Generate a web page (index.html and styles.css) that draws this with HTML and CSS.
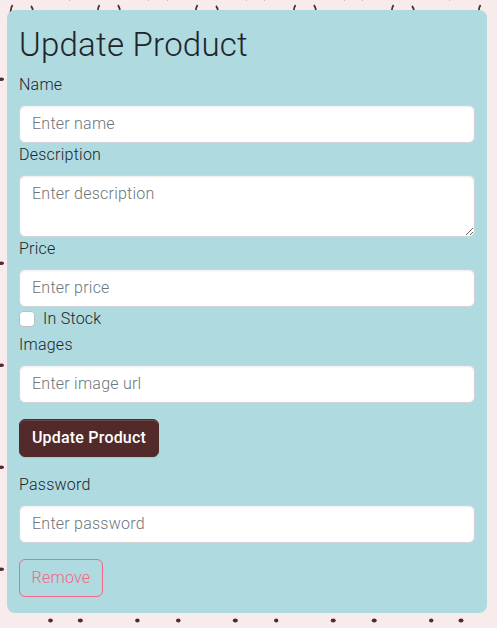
FILE: index.html
```html
<!DOCTYPE html>
<html lang="en">
<head>
<meta charset="utf-8">
<title>Update Product</title>
<link rel="stylesheet" href="styles.css">
</head>
<body>
<svg class="pattern" width="497" height="628" aria-hidden="true">
  <g class="strokes">
    <path d="M12.500 5Q11 7 10.500 12M31 6Q33 8 33 12M99.500 5Q98 7 97.500 12M118 5Q120 8 120 12M197.500 5Q196 7 195.500 12M216 6Q218 8 218 12M295.500 5Q294 7 293.500 12M314 5Q316 8 316 12M393.500 5Q392 7 391.500 12M412 6Q414 8 414 12M480.500 5Q479 7 478.500 12"/>
  </g>
  <g class="specks"><path d="M148 0h1M246 0h1M344 0h1M449 0h1M69 0h1M167 0h1M264 0h1M362 0h1"/></g>
  <g class="dots">
    <ellipse cx="1.500" cy="79.300" rx="2.500" ry="1.800"/><ellipse cx="1.500" cy="263.300" rx="2.500" ry="1.800"/><ellipse cx="1.500" cy="365.300" rx="2.500" ry="1.800"/><ellipse cx="1.500" cy="467.300" rx="2.500" ry="1.800"/><ellipse cx="1.500" cy="569.300" rx="2.500" ry="1.800"/>
    <ellipse cx="50.500" cy="620.500" rx="2.300" ry="2"/><ellipse cx="80.300" cy="620.500" rx="2.500" ry="1.900"/><ellipse cx="137.400" cy="620.500" rx="2.200" ry="2"/><ellipse cx="178.300" cy="620.500" rx="2.300" ry="2"/><ellipse cx="235.300" cy="620.500" rx="2.500" ry="1.900"/><ellipse cx="276.200" cy="620.500" rx="2.100" ry="2"/><ellipse cx="333.200" cy="620.500" rx="2.500" ry="1.900"/><ellipse cx="374.200" cy="620.500" rx="2.500" ry="2"/><ellipse cx="431.200" cy="620.500" rx="2.200" ry="2"/><ellipse cx="461" cy="620.500" rx="2.500" ry="1.900"/>
  </g>
</svg>
<main class="card">
  <h1 class="title">Update Product</h1>
  <form>
    <label class="label" for="name">Name</label>
    <input class="control" id="name" placeholder="Enter name">
    <label class="label" for="description">Description</label>
    <textarea class="control area" id="description" placeholder="Enter description"></textarea>
    <label class="label" for="price">Price</label>
    <input class="control" id="price" placeholder="Enter price">
    <div class="check"><input class="box" type="checkbox" id="stock"><label for="stock">In Stock</label></div>
    <label class="label" for="images">Images</label>
    <input class="control" id="images" placeholder="Enter image url">
    <button class="btn primary" type="button">Update Product</button>
  </form>
  <form class="remove">
    <label class="label" for="password">Password</label>
    <input class="control" id="password" type="password" placeholder="Enter password">
    <button class="btn danger" type="button">Remove</button>
  </form>
</main>
</body>
</html>
```

FILE: styles.css
```css
* { box-sizing: border-box; }
body {
  margin: 0;
  padding: 10px 10px 15px 7px;
  height: 628px;
  overflow: hidden;
  background: #f8ebeb;
  color: #212529;
  font: 300 16px/24px Roboto, "Liberation Sans", sans-serif;
  letter-spacing: .24px;
}
.pattern { position: absolute; inset: 0; z-index: -1; }
.dots { fill: #522a2a; }
.strokes { fill: none; stroke: #522a2a; stroke-width: 1.8; }
.specks { stroke: #522a2a; stroke-width: 1; opacity: .5; }
.card {
  height: 603px;
  padding: 16px 12px;
  background: #aedae0;
  border-radius: 8px;
}
.title { margin: 0 0 10px; font-size: 33px; line-height: 37px; font-weight: 300; letter-spacing: .25px; }
.label { display: block; margin-bottom: 8px; }
.control {
  display: block;
  width: 100%;
  height: 38px;
  margin: 0;
  padding: 5px 12px 7px;
  border: 1px solid #ced4da;
  border-radius: 6px;
  background: #fff;
  box-shadow: inset 0 1px 2px rgba(0, 0, 0, .075);
  font: inherit;
  letter-spacing: inherit;
  color: #212529;
}
.control::placeholder { color: #6c757d; opacity: 1; }
.area { height: 62px; padding: 6px 12px; resize: vertical; }
.check { display: flex; gap: 8px; margin-bottom: 2px; }
.box {
  appearance: none;
  width: 16px;
  height: 16px;
  margin: 4px 0 0;
  background: #fff;
  border: 1px solid #bfbfbf;
  border-radius: 4px;
}
.btn {
  display: block;
  height: 38px;
  margin: 16px 0 0;
  padding: 6px 0;
  border: 1px solid #522a2a;
  border-radius: 6px;
  font: inherit;
  letter-spacing: inherit;
  white-space: nowrap;
}
.primary {
  width: 140px;
  background: #522a2a;
  color: #fff;
  font-weight: 500;
  letter-spacing: .2px;
  box-shadow: inset 0 1px 0 rgba(255, 255, 255, .15), 0 1px 1px rgba(0, 0, 0, .075);
}
.danger { width: 84px; background: transparent; border-color: #f56785; color: #f56785; }
.remove { margin-top: 16px; }
```
